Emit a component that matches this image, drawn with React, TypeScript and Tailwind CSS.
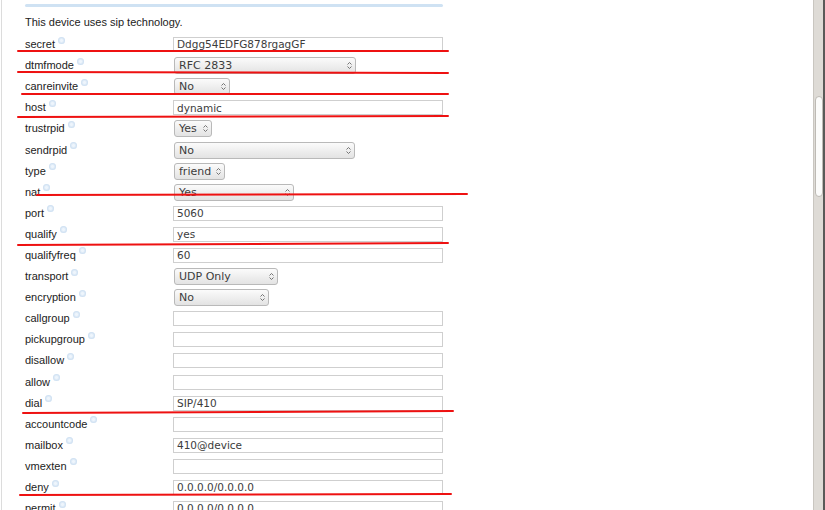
import React from 'react';

type Field = { label: string; kind: 'text' | 'select'; value?: string; w?: number };

const fields: Field[] = [
  { label: 'secret', kind: 'text', value: 'Ddgg54EDFG878rgagGF' },
  { label: 'dtmfmode', kind: 'select', value: 'RFC 2833', w: 182 },
  { label: 'canreinvite', kind: 'select', value: 'No', w: 56 },
  { label: 'host', kind: 'text', value: 'dynamic' },
  { label: 'trustrpid', kind: 'select', value: 'Yes', w: 38 },
  { label: 'sendrpid', kind: 'select', value: 'No', w: 181 },
  { label: 'type', kind: 'select', value: 'friend', w: 51 },
  { label: 'nat', kind: 'select', value: 'Yes', w: 120 },
  { label: 'port', kind: 'text', value: '5060' },
  { label: 'qualify', kind: 'text', value: 'yes' },
  { label: 'qualifyfreq', kind: 'text', value: '60' },
  { label: 'transport', kind: 'select', value: 'UDP Only', w: 104 },
  { label: 'encryption', kind: 'select', value: 'No', w: 95 },
  { label: 'callgroup', kind: 'text' },
  { label: 'pickupgroup', kind: 'text' },
  { label: 'disallow', kind: 'text' },
  { label: 'allow', kind: 'text' },
  { label: 'dial', kind: 'text', value: 'SIP/410' },
  { label: 'accountcode', kind: 'text' },
  { label: 'mailbox', kind: 'text', value: '410@device' },
  { label: 'vmexten', kind: 'text' },
  { label: 'deny', kind: 'text', value: '0.0.0.0/0.0.0.0' },
  { label: 'permit', kind: 'text', value: '0.0.0.0/0.0.0.0' },
];

// hand-drawn annotation strokes
const marks: [number, number, number, number][] = [
  [18, 51, 448, 51],
  [18, 72, 448, 73],
  [22, 94, 448, 94],
  [18, 117, 448, 116],
  [37, 195, 467, 194],
  [18, 245, 448, 243],
  [23, 413, 453, 411],
  [20, 495, 451, 494],
];

function HelpDot() {
  return (
    <span className="ml-[3px] -mt-[9px] inline-block h-[7px] w-[7px] shrink-0 rounded-full bg-[radial-gradient(circle,#eef5fc_20%,#bcd4ec_90%)]" />
  );
}

function SelectBox({ value, w }: { value?: string; w?: number }) {
  return (
    <div
      className="ml-px flex h-[17px] items-center justify-between rounded-[3px] border border-[#b9b9b9] bg-gradient-to-b from-[#fbfbfb] to-[#e3e3e3] pl-[4px] pr-[3px] text-[11px] leading-none text-[#3c3c3c]"
      style={{ width: w }}
    >
      <span>{value}</span>
      <svg width="5" height="9" viewBox="0 0 5 9" className="shrink-0">
        <path d="M0.5 3.5 L2.5 1.5 L4.5 3.5" fill="none" stroke="#666" strokeWidth="0.9" />
        <path d="M0.5 5.5 L2.5 7.5 L4.5 5.5" fill="none" stroke="#666" strokeWidth="0.9" />
      </svg>
    </div>
  );
}

export default function App() {
  return (
    <div className="relative flex h-[510px] w-[825px] overflow-hidden bg-white font-['Liberation_Sans',Arial,sans-serif]">
      <div className="flex-1 border-l border-[#dcdcdc] ml-[1px] pl-[23px]">
        <div className="mt-[4px] h-[3px] w-[418px] rounded-full bg-[#cfe2f3]" />
        <div className="mt-[7px] h-[16px] text-[11px] leading-[16px] text-[#222]">This device uses sip technology.</div>
        <div className="mt-[4px] flex flex-col">
          {fields.map(f => (
            <div key={f.label} className="flex h-[21.1px] shrink-0 items-center">
              <div className="flex w-[148px] items-center text-[11px] leading-none text-[#222]">
                <span>{f.label}</span>
                <HelpDot />
              </div>
              {f.kind === 'text' ? (
                <div className="flex h-[15px] w-[270px] items-center border border-[#cfcfcf] bg-white pl-[3px] font-['DejaVu_Sans',sans-serif] text-[10.5px] leading-none text-[#3c3c3c]">
                  {f.value}
                </div>
              ) : (
                <div className="font-['DejaVu_Sans',sans-serif]">
                  <SelectBox value={f.value} w={f.w} />
                </div>
              )}
            </div>
          ))}
        </div>
      </div>
      <div className="relative flex h-full w-[12px] shrink-0">
        <div className="h-full w-[10px] border-l border-[#c9c6c0] bg-[#dedbd6]">
          <div className="ml-[1px] mt-[96px] h-[101px] w-[8px] rounded-[4px] border border-[#bdbab4] bg-[#fbfbfa]" />
        </div>
        <div className="h-full w-[2px] bg-[#5a5a58]" />
      </div>
      <svg className="pointer-events-none absolute inset-0" width="825" height="510">
        {marks.map(([x1, y1, x2, y2], i) => (
          <line key={i} x1={x1} y1={y1} x2={x2} y2={y2} stroke="#ee1111" strokeWidth="2" strokeLinecap="round" />
        ))}
      </svg>
    </div>
  );
}
